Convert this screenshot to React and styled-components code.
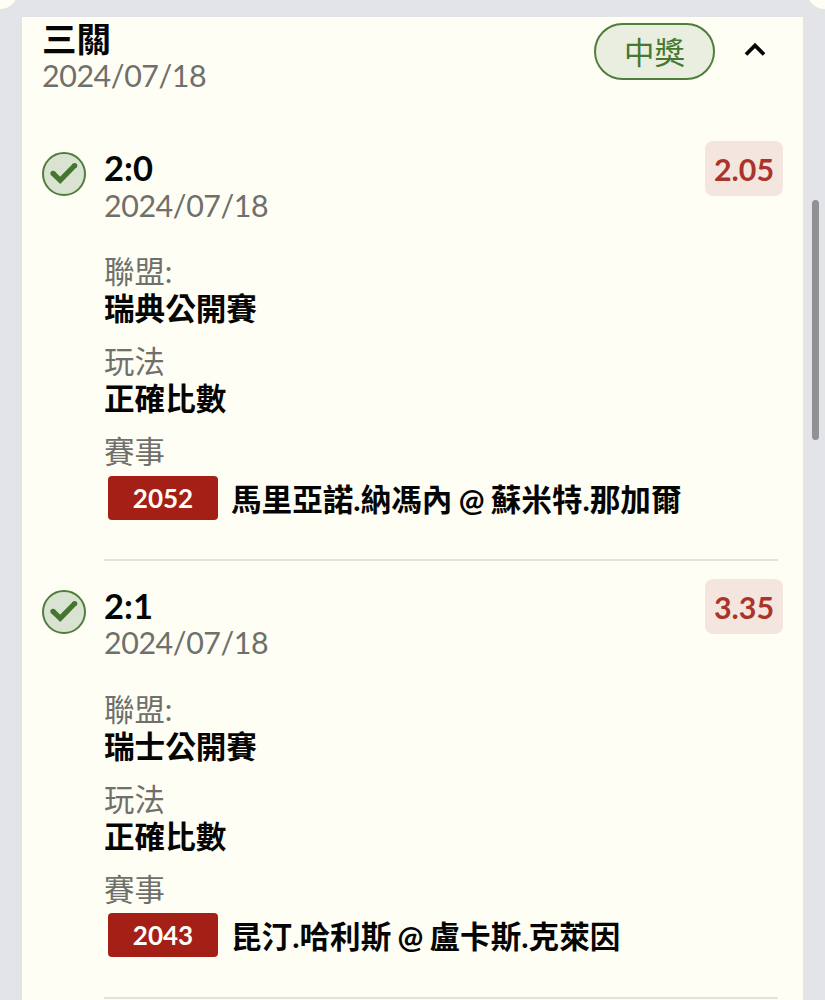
import React from "react";
import styled, { createGlobalStyle } from "styled-components";

const GlobalStyle = createGlobalStyle`
  * { box-sizing: border-box; }
  body {
    margin: 0;
    background: #e3e4e8;
    overflow: hidden;
    font-family: Lato, "Noto Sans CJK TC", sans-serif;
  }
`;

const Screen = styled.div`
  position: relative;
  height: 1000px;
  padding: 17px 22px 0;
  overflow: hidden;
  background: #e3e4e8;
`;

const Corner = styled.div`
  position: absolute;
  top: -27px;
  ${(p) => p.$side}: -18px;
  width: 36px;
  height: 36px;
  border-radius: 50%;
  background: #fefef4;
`;

const ScrollThumb = styled.div`
  position: absolute;
  top: 200px;
  right: 6.5px;
  width: 6.5px;
  height: 240px;
  border-radius: 4px;
  background: #929294;
`;

const Card = styled.main`
  height: 1100px;
  padding: 4px 20px 0;
  background: #fefef4;
`;

const CardHeader = styled.header`
  display: flex;
  justify-content: space-between;
  height: 112px;
`;

const Title = styled.div`
  height: 35px;
  line-height: 36px;
  font-size: 34.6px;
  font-weight: 700;
  color: #050505;
`;

const DateText = styled.div`
  height: 38px;
  line-height: 38px;
  font-size: 30.4px;
  letter-spacing: -0.42px;
  color: #6f6f6b;
`;

const HeaderActions = styled.div`
  display: flex;
  align-items: flex-start;
  padding: 2px 16px 0 0;
  gap: 28px;
`;

const StatusPill = styled.div`
  width: 121px;
  height: 57px;
  border: 2px solid #4f7e3c;
  border-radius: 29px;
  background: #e9eee0;
  color: #44782f;
  font-size: 30.4px;
  line-height: 55px;
  text-align: center;
`;

const Chevron = styled.svg`
  display: block;
  width: 24px;
  height: 16px;
  margin-top: 18px;
`;

const Pick = styled.section`
  display: flex;
  height: 437.5px;
`;

const CheckIcon = styled.svg`
  flex: none;
  width: 44px;
  height: 44px;
  margin: 19px 18px 0 0;
`;

const PickBody = styled.div`
  flex: 1;
  height: 428px;
  border-bottom: 2px solid #e3e3dd;
  margin-right: 5px;
`;

const PickTop = styled.div`
  display: flex;
  justify-content: space-between;
  height: 91px;
  margin-right: -5px;
  padding-top: 16px;
`;

const Score = styled.div`
  height: 36.5px;
  line-height: 37px;
  font-size: 34.5px;
  font-weight: 700;
  color: #050505;
`;

const Odds = styled.div`
  width: 78px;
  height: 55px;
  margin-top: -7.6px;
  border-radius: 8px;
  background: #f4e6df;
  color: #ab342a;
  font-size: 30.4px;
  font-weight: 700;
  line-height: 56px;
  text-align: center;
`;

const Fields = styled.div`
  display: flex;
  flex-direction: column;
  gap: 14px;
  padding-top: 28px;
`;

const Label = styled.div`
  height: 38px;
  line-height: 38px;
  font-size: 30.4px;
  color: #6f6f6b;
`;

const Value = styled.div`
  height: 38px;
  line-height: 38px;
  font-size: 30.6px;
  font-weight: 700;
  color: #050505;
  white-space: nowrap;
`;

const MatchRow = styled.div`
  display: flex;
  align-items: center;
  gap: 13px;
  height: 44px;
  margin: 5.7px 0 0 4px;
`;

const MatchNumber = styled.div`
  width: 110px;
  height: 44px;
  border-radius: 4px;
  background: #a42016;
  color: #fffdf8;
  font-size: 26px;
  font-weight: 700;
  line-height: 45px;
  text-align: center;
`;

const MatchName = styled(Value)`
  padding-top: 4px;
  height: 42px;
  word-spacing: -1.2px;
`;

const picks = [
  { score: "2:0", odds: "2.05", league: "瑞典公開賽", no: "2052", match: "馬里亞諾.納馮內 @ 蘇米特.那加爾" },
  { score: "2:1", odds: "3.35", league: "瑞士公開賽", no: "2043", match: "昆汀.哈利斯 @ 盧卡斯.克萊因" },
];

function PickItem({ score, odds, league, no, match }) {
  return (
    <Pick>
      <CheckIcon viewBox="0 0 44 44">
        <circle cx="22" cy="22" r="21" fill="#dae3d1" stroke="#4f7e3c" strokeWidth="2" />
        <path d="M11 21.3L18.2 28.3L32.7 13.5" fill="none" stroke="#447630" strokeWidth="5.2" />
        <circle cx="11" cy="21.3" r="2.6" fill="#447630" />
        <circle cx="32.7" cy="13.5" r="2.6" fill="#447630" />
      </CheckIcon>
      <PickBody>
        <PickTop>
          <div>
            <Score>{score}</Score>
            <DateText>2024/07/18</DateText>
          </div>
          <Odds>{odds}</Odds>
        </PickTop>
        <Fields>
          <div>
            <Label>聯盟:</Label>
            <Value>{league}</Value>
          </div>
          <div>
            <Label>玩法</Label>
            <Value>正確比數</Value>
          </div>
          <div>
            <Label>賽事</Label>
            <MatchRow>
              <MatchNumber>{no}</MatchNumber>
              <MatchName>{match}</MatchName>
            </MatchRow>
          </div>
        </Fields>
      </PickBody>
    </Pick>
  );
}

export default function App() {
  return (
    <>
      <GlobalStyle />
      <Screen>
        <Corner $side="left" />
        <Corner $side="right" />
        <Card>
          <CardHeader>
            <div>
              <Title>三關</Title>
              <DateText>2024/07/18</DateText>
            </div>
            <HeaderActions>
              <StatusPill>中獎</StatusPill>
              <Chevron viewBox="0 0 24 16">
                <path d="M3 13.5L12 4.5L21 13.5" fill="none" stroke="#050505" strokeWidth="3.8" />
              </Chevron>
            </HeaderActions>
          </CardHeader>
          {picks.map((pick) => (
            <PickItem key={pick.no} {...pick} />
          ))}
        </Card>
        <ScrollThumb />
      </Screen>
    </>
  );
}
